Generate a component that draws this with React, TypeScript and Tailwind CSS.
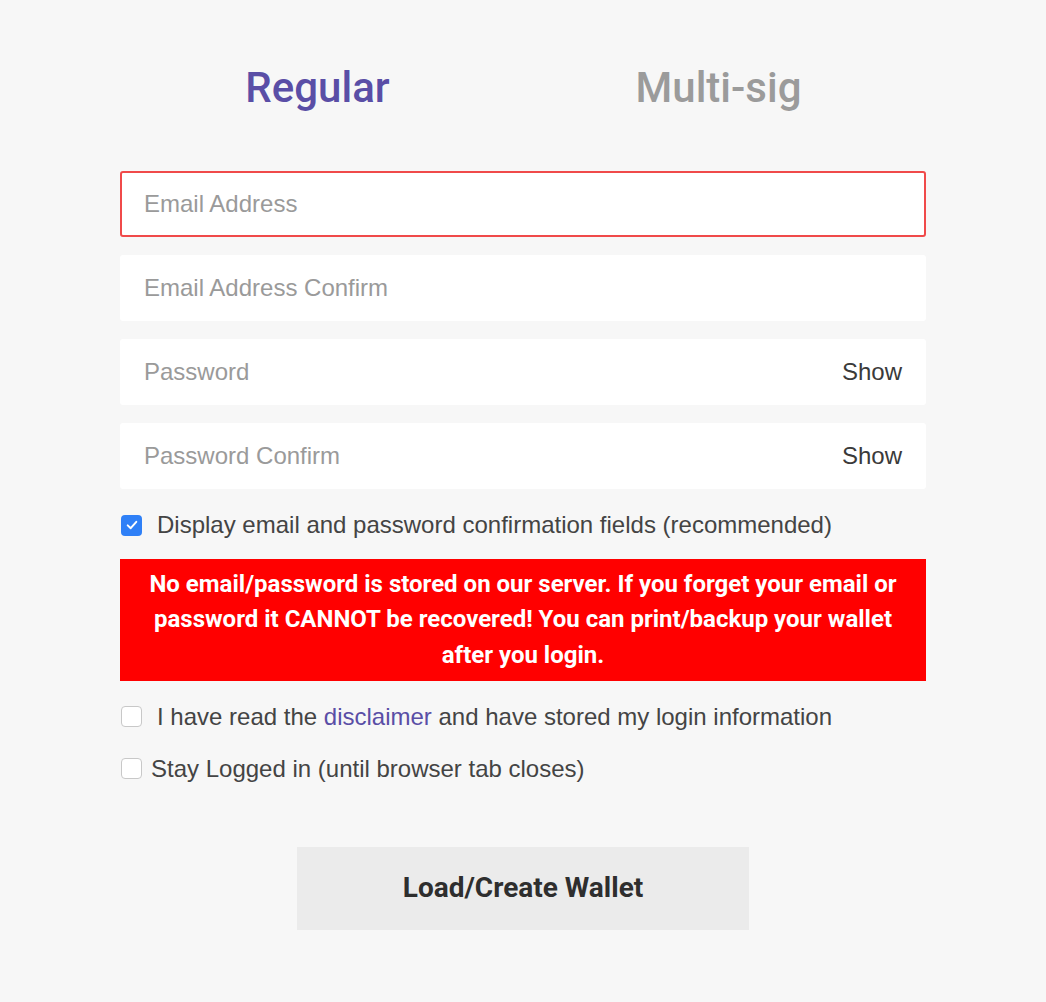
import React from "react";

function Field({ placeholder, active, show }: { placeholder: string; active?: boolean; show?: boolean }) {
  return (
    <div
      className={
        "flex h-[66px] items-center justify-between rounded-[3px] bg-white pl-[22px] pr-[22px] " +
        (active ? "border-2 border-[#f04a4a]" : "border-2 border-white")
      }
    >
      <span className="text-[24px] text-[#9a9a9a]">{placeholder}</span>
      {show && <span className="text-[24px] text-[#3a3a3a]">Show</span>}
    </div>
  );
}

function Check({ checked }: { checked?: boolean }) {
  return checked ? (
    <span className="flex h-[21px] w-[21px] shrink-0 items-center justify-center rounded-[4px] bg-[#2f80f7]">
      <svg width="14" height="14" viewBox="0 0 13 13" fill="none">
        <path d="M2.5 6.8 L5.3 9.5 L10.5 3.5" stroke="white" strokeWidth="1.8" strokeLinecap="round" strokeLinejoin="round" />
      </svg>
    </span>
  ) : (
    <span className="h-[21px] w-[21px] shrink-0 rounded-[4px] border border-[#c8c8c8] bg-white" />
  );
}

export default function App() {
  return (
    <div className="min-h-[1002px] w-full bg-[#f7f7f7] font-['Liberation_Sans',Arial,sans-serif]">
      <div className="mx-auto w-[806px] pt-[62px]">
        <div className="grid grid-cols-2 font-['Roboto',sans-serif] text-[42px] font-medium leading-[52px]">
          <div className="pr-2 text-center text-[#5a4ea6]">Regular</div>
          <div className="pr-3 text-center text-[#9b9b9b]">Multi-sig</div>
        </div>

        <div className="mt-[57px] flex flex-col gap-[18px]">
          <Field placeholder="Email Address" active />
          <Field placeholder="Email Address Confirm" />
          <Field placeholder="Password" show />
          <Field placeholder="Password Confirm" show />
        </div>

        <div className="mt-[22px] flex items-center gap-[15px] pl-[1px] text-[24px] leading-[28px] text-[#444]">
          <Check checked />
          <span>Display email and password confirmation fields (recommended)</span>
        </div>

        <div className="mt-[20px] bg-[#ff0000] px-4 py-[8px] text-center font-['Roboto',sans-serif] text-[24px] font-bold leading-[35.3px] text-white">
          No email/password is stored on our server. If you forget your email or
          <br />
          password it CANNOT be recovered! You can print/backup your wallet
          <br />
          after you login.
        </div>

        <div className="mt-[22px] flex items-center gap-[15px] pl-[1px] text-[24px] leading-[28px] text-[#444]">
          <Check />
          <span>
            I have read the <span className="text-[#5a4ea6]">disclaimer</span> and have stored my login information
          </span>
        </div>

        <div className="mt-[24px] flex items-center gap-[9px] pl-[1px] text-[24px] leading-[28px] text-[#444]">
          <Check />
          <span>Stay Logged in (until browser tab closes)</span>
        </div>

        <div className="mt-[64px] flex justify-center">
          <button className="h-[83px] w-[452px] bg-[#ebebeb] font-['Roboto',sans-serif] text-[28px] font-bold text-[#2e2e2e]">
            Load/Create Wallet
          </button>
        </div>
      </div>
    </div>
  );
}
